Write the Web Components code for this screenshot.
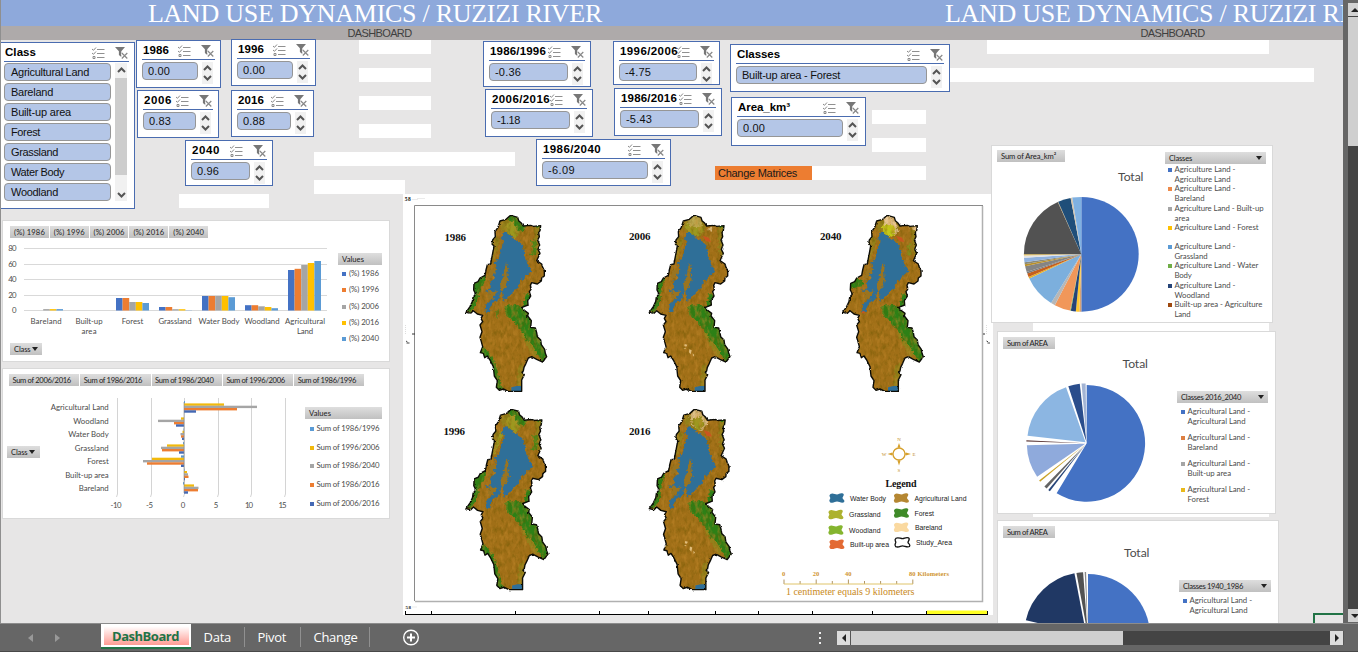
<!DOCTYPE html>
<html lang="en">
<head>
<meta charset="utf-8">
<title>Land Use Dynamics</title>
<style>
html,body{margin:0;height:100%;overflow:hidden;background:#666}
body{font-family:"Liberation Sans",Arial,sans-serif}
</style>
</head>
<body>
<workbook-app></workbook-app>
<script>
const CHART = 'Lato,"Open Sans",sans-serif';
const esc = s => String(s).replace(/&/g,'&amp;').replace(/</g,'&lt;');
/* SVG text with a fixed run width */
const T = (x,y,w,s,o={}) => `<text x="${x}" y="${y}" ${w?`textLength="${w}"`:''} font-size="${o.size||7.8}" font-family='${o.font||CHART}' fill="${o.fill||'#4c4c4c'}" font-weight="${o.bold?700:400}" text-anchor="${o.anchor||'start'}">${esc(s)}</text>`;
const define = (name, render) => customElements.define(name, class extends HTMLElement{
  connectedCallback(){
    if(this.shadowRoot) return;
    this.attachShadow({mode:'open'}).innerHTML = render(this);
  }
});
const ctx = document.createElement('canvas').getContext('2d');

/* Single-line label whose letter spacing is tuned to a given width */
customElements.define('fit-text', class extends HTMLElement{
  connectedCallback(){
    if(this.shadowRoot) return;
    const r = this.attachShadow({mode:'open'});
    r.innerHTML = '<style>:host{display:block;white-space:pre}</style><slot></slot>';
    const w = +this.getAttribute('w'); if(!w) return;
    const cs = getComputedStyle(this), s = this.textContent;
    ctx.font = `${cs.fontWeight} ${cs.fontSize} ${cs.fontFamily}`;
    this.style.letterSpacing = ((w - ctx.measureText(s).width)/s.length).toFixed(3)+'px';
  }
});

define('slicer-box', el => {
  const items = JSON.parse(el.getAttribute('items'));
  const list = el.hasAttribute('list');
  const bt = el.getAttribute('lead') || 0;
  return `<style>
  :host{position:absolute;box-sizing:border-box;border:1px solid #4a6cb0;background:#fff;overflow:hidden}
  .head{display:flex;align-items:center;height:18px;margin:${bt}px 5px 0 5px;border-bottom:1px solid #4a6cb0;padding-left:1px}
  .head fit-text{flex:1;min-width:0;font-size:11.5px;font-weight:700;color:#000;line-height:18px}
  .head svg{flex:none;margin-top:1px}
  .multi{margin-right:9.5px}
  .last{margin-right:1.5px}
  .body{display:flex;margin:${list?1:2}px 7px 0 5px;gap:4px}
  .items{flex:1;display:flex;flex-direction:column;gap:2px}
  .it{box-sizing:border-box;height:18px;border:1px solid #969696;border-radius:4px;background:#b4c6e7;padding-left:${list?6:5}px;line-height:17px;font-size:11px;color:#111}
  .sc{width:${list?12:11}px;background:#f1f1f1;height:${list?138:22}px;display:flex;flex-direction:column;align-items:center;justify-content:${list?'space-between':'space-evenly'}}
  .thumb{flex:1;width:100%;background:#cdcdcd;margin:5px 0 17px}
  .sc svg{flex:none;display:block}
  </style>
  <div class="head"><fit-text w="${el.getAttribute('tw')}">${esc(el.getAttribute('title-text'))}</fit-text>
  <svg class="multi" width="13" height="12" viewBox="0 0 13 12" fill="none" stroke="#909090" stroke-width="1"><path d="M5 2.5H12.5M5 6.5H12.5M5 10.5H12.5"/><path d="M0 2l1.5 1.3L4 .5M0 6l1.5 1.3L4 4.5M1 9.5h2v2H1z" stroke="#8a8a8a"/></svg>
  <svg class="last" width="13" height="12" viewBox="0 0 13 12"><path d="M0 0H10L6.3 4.2V10L3.9 8V4.2Z" fill="#777"/><path d="M6.8 6L12.3 11.5M12.3 6L6.8 11.5" stroke="#fff" stroke-width="2.6"/><path d="M6.8 6L12.3 11.5M12.3 6L6.8 11.5" stroke="#888" stroke-width="1.2"/></svg></div>
  <div class="body"><div class="items">${items.map(([s,w])=>`<div class="it"><fit-text w="${w}">${esc(s)}</fit-text></div>`).join('')}</div>
  <div class="sc"><svg ${list?'style="margin-top:4px"':''} width="9" height="6" viewBox="0 0 9 6"><path d="M1 5L4.5 1.5L8 5" fill="none" stroke="#555" stroke-width="2"/></svg>${list?'<div class="thumb"></div>':''}<svg ${list?'style="margin-bottom:3px"':''} width="9" height="6" viewBox="0 0 9 6"><path d="M1 1L4.5 4.5L8 1" fill="none" stroke="#555" stroke-width="2"/></svg></div></div>`;
});

define('field-button', el => `<style>
  :host{display:flex;align-items:center;justify-content:space-between;box-sizing:border-box;height:12px;flex:none;padding:0 4px;background:linear-gradient(#dedede,#c0c0c0);color:#1c1c1c;font:7.6px/12px ${CHART}}
  i{width:0;height:0;border:3px solid transparent;border-top:4px solid #222;border-bottom:0}
  </style><fit-text w="${el.getAttribute('w')}">${esc(el.getAttribute('label'))}</fit-text>${el.hasAttribute('menu')?'<i></i>':''}`);

define('chart-legend', el => {
  const rows = JSON.parse(el.getAttribute('rows')), pitch = el.getAttribute('pitch');
  return `<style>
  :host{display:flex;flex-direction:column;font:7.8px/9.9px ${CHART};color:#4c4c4c}
  .rows{padding:${el.getAttribute('pad')}}
  .r{display:flex;height:${pitch}px;gap:${el.getAttribute('gap')||2.5}px}
  .r i{width:4px;height:4px;margin-top:3px;flex:none}
  </style><slot></slot><div class="rows">${rows.map(([c,...ls])=>`<div class="r"><i style="background:${c}"></i><div>${ls.map(([s,w])=>`<fit-text w="${w}">${esc(s)}</fit-text>`).join('')}</div></div>`).join('')}</div>`;
});

define('column-chart', () => {
  const C=['#4472c4','#ed7d31','#a5a5a5','#ffc000','#5b9bd5'];
  const G=[[30,[0,0,1.4,1.4,1.4]],[73,[0,0,0,0,0]],[116,[12.5,12.5,8.5,8.5,7.5]],[159,[3.5,3.5,1.3,1.3,.2]],[202,[14.5,14.5,14.5,14.5,13.3]],[245,[5.3,5.3,4.2,3.5,2.3]],[288,[40.5,41.7,45.5,47.5,49.5]]];
  let s='';
  [[80,248.5],[60,264.5],[40,279.5],[20,295.5],[0,310.5]].forEach(([v,y])=>{s+=`<path d="M24 ${y}H327" stroke="#d9d9d9"/>`+T(16.5,y+2.7,v?8.3:4,v,{anchor:'end'})});
  G.forEach(([x,h])=>h.forEach((v,i)=>{s+=`<rect x="${x+i*6.6}" y="${310.5-v}" width="6.6" height="${v}" fill="${C[i]}"/>`}));
  [['Bareland',46,31],['Built-up',89,27],['Forest',132.5,21.5],['Grassland',175,33],['Water Body',219,41],['Woodland',262,35],['Agricultural',305,40]].forEach(([t,x,w])=>s+=T(x,324.3,w,t,{anchor:'middle'}));
  s+=T(89,334,15,'area',{anchor:'middle'})+T(305,334,16,'Land',{anchor:'middle'});
  const yrs=['1986','1996','2006','2016','2040'];
  return `<style>
  :host{position:absolute;box-sizing:border-box;background:#fff;border:1px solid #d9d9d9;display:flex;flex-direction:column}
  .f{display:flex;gap:1px;padding:5px 0 0 7px}.f field-button{width:38.8px}
  .b{display:flex;height:105px}svg{display:block;flex:none}
  .c{width:32px;margin-left:7px;padding-right:4.5px}
  chart-legend{width:44px;margin:15px 0 0 3px}
  </style><div class="f">${yrs.map(y=>`<field-button label="(%) ${y}" w="31"></field-button>`).join('')}</div>
  <div class="b"><svg width="332" height="105" viewBox="3 238 332 105">${s}</svg>
  <chart-legend pitch="16.3" pad="4px 0 0 4px" gap="3" rows='${JSON.stringify(yrs.map((y,i)=>[C[i],['(%) '+y,30]]))}'><field-button label="Values" w="22"></field-button></chart-legend></div>
  <field-button class="c" label="Class" w="16.500" menu></field-button>`;
});

define('bar-chart', () => {
  const C=['#5b9bd5','#f2b90c','#a5a5a5','#ed7d31','#4468b4'];
  const G=[['Agricultural Land',407,58,[1,40,73,53,12]],['Woodland',421,35.5,[0,-3,-26,-10,-8]],['Water Body',434.3,40.5,[-.5,-1.5,-3.5,-3,-2]],['Grassland',448,34,[-1,-17,-23,-22,-5]],['Forest',461.3,21.5,[-3,-32,-41,-37,-3]],['Built-up area',474.6,43.5,[.5,3,4,4.5,1]],['Bareland',488,30,[-1,10,14.5,14,4]]];
  let s='';
  [[-10,117.5,116,11],[-5,151.5,149.5,7],[0,184.5,183,4],[5,218.5,216,4],[10,251.5,249,8],[15,285.5,282.5,8]].forEach(([v,x,c,w])=>s+=`<path d="M${x} 398V494l-1 3" fill="none" stroke="#d4d4d4"/>`+T(c,508,w,v,{anchor:'middle'}));
  G.forEach(([t,y,w,v])=>{s+=T(108.7,y+3,w,t,{anchor:'end'});v.forEach((n,i)=>{s+=`<rect x="${n<0?184+n:184}" y="${y-5.9+i*2.3}" width="${Math.abs(n)}" height="2.4" fill="${C[i]}"/>`})});
  s+='<path d="M184 402V493" stroke="#8a8a8a" stroke-width=".6"/>';
  const yrs=['1986/1996','1996/2006','1986/2040','1986/2016','2006/2016'];
  return `<style>
  :host{position:absolute;box-sizing:border-box;background:#fff;border:1px solid #d9d9d9;display:flex;flex-direction:column}
  .f{display:flex;gap:1px;padding:5px 0 0 6px}.f field-button{width:70.3px;padding-left:3.5px}
  .b{display:flex}svg{display:block;flex:none}
  .c{width:33px;margin:60px 0 0 4px;padding-right:5px}
  chart-legend{width:77px;margin:21px 0 0 12px}
  </style><div class="f">${['2006/2016','1986/2016','1986/2040','1996/2006','1986/1996'].map(y=>`<field-button label="Sum of ${y}" w="58.500"></field-button>`).join('')}</div>
  <div class="b"><field-button class="c" label="Class" w="16.500" menu></field-button><svg width="253" height="130" viewBox="40 386 253 130">${s}</svg>
  <chart-legend pitch="18.65" pad="5px 0 0 5px" rows='${JSON.stringify(yrs.map((y,i)=>[C[i],['Sum of '+y,63]]))}'><field-button label="Values" w="22"></field-button></chart-legend></div>`;
});

define('pie-chart', el => {
  const d = JSON.parse(el.querySelector('script').textContent);
  const P=(cx,cy,r,a)=>[cx+r*Math.sin(a*Math.PI/180),cy-r*Math.cos(a*Math.PI/180)].map(n=>n.toFixed(2)).join(' ');
  const pie = d.slices.map(([a,b,c,e=0])=>{
    const m=(a+b)/2*Math.PI/180, cx=d.cx+e*Math.sin(m), cy=d.cy-e*Math.cos(m);
    return `<path d="M${cx} ${cy}L${P(cx,cy,d.r,a)}A${d.r} ${d.r} 0 ${b-a>180?1:0} 1 ${P(cx,cy,d.r,b)}Z" fill="${c}"/>`}).join('');
  return `<style>
  :host{position:absolute;box-sizing:border-box;background:#fff;border:1px solid #d9d9d9;display:flex;overflow:hidden}
  .l{flex:none;width:${d.left}px}
  svg{display:block}
  .fb{width:${d.fw}px;margin:${d.ft}px 0 0 ${d.fl}px}
  chart-legend{width:${d.lw}px;margin-top:${d.lt}px}
  </style><div class="l"><field-button class="fb" label="${d.field}" w="${d.ftw}"></field-button>
  <svg width="${d.left}" height="${d.h}" viewBox="${d.x} ${d.y} ${d.left} ${d.h}">${T(d.tx,d.ty,25.5,'Total',{size:12.2})}${pie}</svg></div>
  <chart-legend pitch="${d.pitch}" pad="${d.pad}" rows='${JSON.stringify(d.rows)}'><field-button label="${d.cls}" w="${d.clw}" menu></field-button></chart-legend>`;
});

define('map-panel', () => {
  const outline='M335 77L353 82L356 92L363 98L370 108L392 106L400 109L422 107L420 122L416 128L418 140L413 150L419 165L414 178L420 190L410 212L425 222L428 232L433 242V258L425 264L424 273L412 282L395 278L391 286L393 298L388 305L392 318L383 332L384 345L366 352L372 360L385 370L383 378L394 392L392 412L406 414L410 428L412 440L422 450L424 464L434 478L436 490L440 500L428 516L410 508L395 500L385 504L378 520L372 532L370 543L366 547L373 554L365 570V604H325L310 597L298 601L289 592L292 572L283 558L280 530L270 510L262 498L254 503L250 490L241 488L248 470L244 455L240 442L246 425L240 405L248 395L243 385L248 376L232 372L220 362L212 370L198 367L210 350L217 335L219 322L227 312L221 300L222 280L234 275L240 264L255 256L258 240L262 224L272 222L275 205L278 190L282 168L276 162L278 150L286 140L285 125L294 112L300 93L318 88L330 77Z';
  const water='M335 140L358 155L368 165L375 205L385 225L395 242L375 262L360 275L352 295L335 310L322 322L312 336L306 305L300 312L296 332L280 338L272 348L270 366L256 365L260 340L278 326L284 312L268 314L256 300L273 295L268 275L285 268L276 255L288 238L284 218L298 200L305 170L312 155L302 145L312 128L320 130Z';
  const island='M318 220L325 225L322 245L325 270L317 292L304 307L300 285L308 265L313 240Z M270 240L288 236L282 256L268 270L262 262Z M264 300L280 305L292 300L282 322L266 330Z';
  const east='M315 348L340 344L366 350L395 365L406 395L402 405L418 414L424 440L442 475L452 500L432 528L415 495L400 470L380 450L365 425L345 400L325 382L313 360Z M378 308L402 318L394 350L368 350Z';
  const west='M212 280L245 246L257 258L252 280L238 305L230 335L215 366L190 367L205 345L215 318Z';
  const sw='M238 462L250 470L268 490L278 505L292 540L300 570L312 604L280 600L273 558L270 530L252 508L233 490Z';
  const A='#a06f17',Gn='#2d8016',Gr='#9c981f',W='#2f6f98',B='#dfc088';
  const region=(tf,v)=>`<g transform="${tf}"><g clip-path="url(#area)"><g filter="url(#tex)">
   <path d="${outline}" fill="${A}"/>
   <path d="M300 90H365V130L330 140L300 120Z M400 108H430V215L408 190Z M365 415L420 490L400 500L365 440Z M354 530L370 520V600H350Z M280 130L300 150L282 210L262 225Z" fill="#94801a" filter="url(#rough)"/>
   <g filter="url(#rough)">
   ${v.north.map(([p,c])=>`<path d="${p}" fill="${c}"/>`).join('')}
   <path d="${east}" fill="${Gn}"/>
   <path d="${v.west||west}" fill="${Gn}"/>
   ${v.sw?`<path d="${sw}" fill="${Gn}"/>`:''}
   ${v.spots||''}</g></g>
   <path d="${water}" fill="${W}" filter="url(#rough)"/><path d="${island}" fill="#9a7420" filter="url(#rough)"/>
   ${v.urban||''}
   <path d="M334 592L350 588H368V606H334Z" fill="${W}"/></g>
   <path d="${outline}" fill="none" stroke="#0c0c06" stroke-width="4.2" stroke-linejoin="round" filter="url(#edge)"/></g>`;
  const early=[['M320 98L345 92L362 118L345 145L320 128Z',Gr],['M325 70L358 76L362 97L380 106L366 126L350 118L342 97L322 90Z',Gn],['M392 150L410 152L408 196L390 198L398 172Z','#4c8415'],['M404 104H428V120Z',Gn]];
  const v86={north:early,sw:1,spots:`<path d="M284 362L298 360L292 388Z M308 262L320 262L320 280L310 276Z" fill="#53831a"/>`};
  const v96={north:[...early,['M300 140L308 142L288 200L276 215Z',Gr]],sw:1};
  const red='<path d="M358 137L376 143L383 156L368 154Z" fill="#c8551f"/>';
  const pts='<path d="M304 462l8 2l-3 6l-6-2zM318 478l7 3l-3 12l-5-6zM328 490l5 5-4 5zM300 475l7-2v4z" fill="#e0bd7c"/>';
  const lw='M212 276L246 258L236 290L230 335L215 366L190 367L205 345L215 318Z';
  const v06={north:[['M306 96H352L362 126L340 138L312 136Z',Gr],['M325 72L352 78L356 110L318 112L312 92Z','#bba951'],['M370 116L390 112L385 126Z',B],['M404 104H428V120Z',Gn]],west:lw,urban:red+pts};
  const v16={north:[['M316 94L330 74L354 78L370 118L355 140L325 125Z',B],['M320 110L350 96L362 122L342 138Z',Gr],['M404 104H428V120Z',Gn]],west:lw,urban:red+pts};
  const v40={north:[['M318 84L340 72L356 80L362 118L368 125L352 138L322 112Z','#e9c894'],['M318 104L350 106L356 130L338 142L320 130Z','#c2c81a'],['M393 110L422 108V126Z','#e2bd86'],['M392 165L402 160L406 198L392 195Z','#7c8c18']],west:'M212 276L240 262L262 280L250 290L220 296Z',urban:red+'<path d="M256 364h8v6h-8z" fill="#c8551f"/>'};
  const SE='"Liberation Serif",serif',SA='"Liberation Sans",sans-serif';
  let s='';
  [['1986',444.5,241],['2006',629,240],['2040',820,240],['1996',443.5,435],['2016',629,435]].forEach(([t,x,y])=>s+=T(x,y,21.5,t,{font:SE,bold:1,size:11,fill:'#111'}));
  const blob=(x,y,c,o)=>`<path transform="translate(${x} ${y})" d="M-6.5-4C-4.500-5.500-2-3.600 0-3.600C2-3.600 3-5.400 6-4.500C8-3.300 5.600-1.300 5.500 0C5.800 1.800 8.500 2 7 4.200C5 5.500 2 3.600 0 3.600C-2 3.600-3.500 5.500-6.800 4.400C-8.600 2-6.800 1.600-6.700 0C-6.800-1.400-8.600-2.200-6.500-4Z" fill="${c}" ${o?'stroke="#111" stroke-width="1.3"':''}/>`;
  [['Water Body',837,498,850,36,501,W],['Grassland',836,514.5,849,31.5,517.3,'#adb22f'],['Woodland',836,530,849,31.5,532.7,'#85b52f'],['Built-up area',837,544.3,850,39,547.3,'#e36a33'],['Agricultural Land',901.5,498,914.5,52,501,'#b58732'],['Forest',901.5,513,914.5,19.5,515.7,'#3f8a28'],['Bareland',901.5,527.3,915,27,530,'#fad9a0'],['Study_Area',902.5,542.3,916,36,545,'none',1]].forEach(([t,bx,by,x,w,y,c,o])=>s+=blob(bx,by,c,o)+T(x,y,w,t,{font:SA,size:6.9,fill:'#1a1a1a'}));
  const gold='#d6a02c';
  s+=T(885.5,487,31,'Legend',{font:SE,bold:1,size:10,fill:'#111'});
  s+=`<circle cx="899" cy="454" r="6" fill="#fff" stroke="${gold}" stroke-width="1.3"/><path d="M899 448l-1.500-.8L899 443l1.500 4.200zM899 460l-1.500.8L899 465.500l1.500-4.700zM905 454l.8-1.500L911 454l-5.200 1.500zM893 454l-.8-1.500L887.500 454l4.700 1.500z" fill="${gold}"/>`;
  [['N',899,441],['S',899,472],['W',884,456],['E',914,456]].forEach(([t,x,y])=>s+=T(x,y,0,t,{font:SE,size:5,fill:'#c08a20',anchor:'middle'}));
  const ticks=Array.from({length:9},(_,i)=>`M${784+i*16.1} ${i%2||i==6?581:579.5}V584`).join('');
  s+=`<path d="${ticks}" stroke="#9c7a3c" stroke-width=".8"/><path d="M784 584H913" stroke="#dfc46a"/>`;
  [['0',783.5,3],['20',816,6.5],['40',848.3,6.5]].forEach(([t,x,w])=>s+=T(x,575.7,w,t,{font:SE,size:6.5,fill:'#cf9430',anchor:'middle',bold:1}));
  s+=T(909,575.7,40,'80 Kilometers',{font:SE,size:6.5,fill:'#cf9430',bold:1})+T(786,594.7,128.5,'1 centimeter equals 9 kilometers',{font:SE,size:10,fill:'#c98a22'});
  s+=T(404.8,201.4,6,'58',{font:SE,size:5.5,fill:'#111',bold:1})+T(405.5,608.7,5.5,'58',{font:SE,size:5,fill:'#111',bold:1});
  s+=`<path d="M412 199.500h6M417 198.500h8M412 607h5" stroke="#ddd" stroke-width=".6"/><path d="M406 341l1.500 1M406.500 343h3M986.500 341l1.500 .8M987.500 343h2.500" stroke="#444"/><path d="M405.500 325v10M986.500 325v10" stroke="#ddd" stroke-dasharray="1 1"/><path d="M412 334h3M983 334h2" stroke="#333"/>`;
  return `<style>:host{display:block;position:absolute}svg{display:block}</style>
  <svg width="590" height="421" viewBox="403 194 590 421"><defs>
  <clipPath id="area"><path d="${outline}"/></clipPath>
  <filter id="tex" x="0" y="0" width="100%" height="100%" color-interpolation-filters="sRGB"><feTurbulence type="fractalNoise" baseFrequency=".09 .05" numOctaves="3" seed="4" result="n"/><feColorMatrix in="n" values="0 0 0 0 .4  0 0 0 0 .33  0 0 0 0 0  0 1.100 0 0 -.5" result="d"/><feColorMatrix in="n" values="0 0 0 0 .76  0 0 0 0 .53  0 0 0 0 .17  1.300 0 0 0 -.55" result="l"/><feComposite in="d" in2="SourceGraphic" operator="in" result="dd"/><feComposite in="l" in2="SourceGraphic" operator="in" result="ll"/><feMerge><feMergeNode in="SourceGraphic"/><feMergeNode in="dd"/><feMergeNode in="ll"/></feMerge></filter>
  <filter id="rough" color-interpolation-filters="sRGB"><feTurbulence type="fractalNoise" baseFrequency=".12" numOctaves="2" seed="8"/><feDisplacementMap in="SourceGraphic" scale="15" xChannelSelector="R" yChannelSelector="G"/></filter>
  <filter id="edge" color-interpolation-filters="sRGB"><feTurbulence type="fractalNoise" baseFrequency=".12" numOctaves="2" seed="3"/><feDisplacementMap in="SourceGraphic" scale="7" xChannelSelector="R" yChannelSelector="G"/></filter></defs>
  <rect x="403" y="194" width="590" height="421" fill="#fff"/>
  <path d="M414.500 601V205.500H983" fill="none" stroke="#8a8a8a"/><path d="M982.500 206V601.500H415" fill="none" stroke="#b0b0b0" stroke-width="1.5"/>
  ${region('translate(400 190) scale(.33333)',v86)}${region('translate(583.333 190) scale(.33333)',v06)}${region('translate(776.667 190) scale(.33333)',v40)}
  ${region('translate(399 383.300) scale(.3385 .3416)',v96)}${region('translate(582.300 383.300) scale(.3385 .3416)',v16)}
  ${s}
  <rect x="927" y="610.500" width="60" height="3.500" fill="#ff2"/><path d="M405 614.500H988M405.500 611v4M431.500 611v4M515.500 611v4M599.500 611v4M648.500 611v4M715.500 611v4M758.500 611v4M812.500 611v4M872.500 611v4M926.500 611v4M987.500 611v4" stroke="#000" fill="none"/>
  </svg>`;
});

define('sheet-banner', () => `<style>
  :host{display:block;height:40px}
  .t,.s{display:flex;white-space:nowrap}
  .t{height:26px;background:#8ea9db;color:#fff;font:26px/27px "Liberation Serif",serif}
  .s{height:14px;background:#aeaaaa;color:#3f3f3f;font:11px/14px "Liberation Sans",sans-serif}
  .t fit-text:first-child{margin-left:148px;width:797px}.s fit-text:first-child{margin-left:347.5px;width:793px}
  fit-text{flex:none}
  </style><div class="t"><fit-text w="454">LAND USE DYNAMICS / RUZIZI RIVER</fit-text><fit-text w="454">LAND USE DYNAMICS / RUZIZI RIVER</fit-text></div>
  <div class="s"><fit-text w="64">DASHBOARD</fit-text><fit-text w="64">DASHBOARD</fit-text></div>`);

define('work-sheet', () => {
  const S=(x,y,w,h,t,tw,items,extra='')=>`<slicer-box style="left:${x}px;top:${y}px;width:${w}px;height:${h}px" title-text="${t}" tw="${tw}" items='${JSON.stringify(items)}' ${extra}></slicer-box>`;
  const strips=[[359,40,72],[359,68,72],[359,96,72],[359,124,72],[314,152,201],[314,180,91],[179,194,90],[872,110,54],[872,138,54],[812,166,114],[987,40,282],[940,68,374]];
  const AL=['Agriculture Land -',61],BL=['Agricultural Land -',62.5];
  const p1={x:992,y:162,h:158,left:173,field:'Sum of Area_km²',fw:68,ft:4,fl:5,ftw:55.5,tx:1118,ty:181.3,cx:1081.3,cy:254.3,r:57.4,
   lw:101,lt:6,cls:'Classes',clw:23,pitch:19.3,pad:'1px 0 0 3px',
   slices:[[0,180,'#4472c4'],[180,182,'#d6a276'],[182,185.5,'#ffc832'],[185.5,190.5,'#264478'],[190.5,191.2,'#70ad47'],[191.2,207.5,'#f1975a'],[207.5,211.8,'#b7b7b7'],[211.8,245,'#7cafdd'],[245,246.7,'#e7b020'],[246.7,250.4,'#c55f1c'],[250.4,252,'#7b7b7b'],[252,258,'#848484'],[258,260,'#b9902a'],[260,262,'#8a8a78'],[262,266.5,'#8fb2e0'],[266.5,268.8,'#e4e4e4'],[268.8,270,'#ecc14d'],[270,335.8,'#525252'],[335.8,336.3,'#c0a060'],[336.3,349.3,'#1f4e79'],[349.3,351,'#d5c5ad'],[351,360,'#7fb1e2']],
   rows:[['#4472c4',AL,['Agriculture Land',56]],['#ed8a4a',AL,['Bareland',30]],['#a5a5a5',['Agriculture Land - Built-up',89],['area',15]],['#ffc000',['Agriculture Land - Forest',84]],['#5b9bd5',AL,['Grassland',33]],['#70ad47',['Agriculture Land - Water',84],['Body',17]],['#264478',AL,['Woodland',35]],['#9e480e',['Built-up area - Agriculture',88],['Land',16]]]};
  const p2={x:998,y:349,h:162,left:179,field:'Sum of AREA',fw:52,ft:5,fl:5,ftw:41,tx:1122.500,ty:368.3,cx:1086.7,cy:443.3,r:58.4,
   lw:91,lt:59,cls:'Classes 2016_2040',clw:60,pitch:25.9,pad:'4px 0 0 4px',
   slices:[[0,211,'#4472c4'],[217.5,219.5,'#264478',2],[221.5,224.5,'#636363',2],[230.5,232,'#c9a227',2],[235.5,268.5,'#8faadc',1.5],[271.7,273,'#5d3a3a',2],[276.5,340.5,'#8cb6e2',1.5],[342,353.5,'#2a4d8c',1.5],[355,359,'#a3b4d4',1.5]],
   rows:[['#4472c4',BL,['Agricultural Land',58]],['#dd7f42',BL,['Bareland',30]],['#a5a5a5',BL,['Built-up area',43.5]],['#e9b91b',BL,['Forest',21.5]]]};
  const p3={x:998,y:538,h:140,left:181,field:'Sum of AREA',fw:52,ft:5,fl:5,ftw:41,tx:1124,ty:557.3,cx:1088,cy:636,r:62,
   lw:92,lt:59,cls:'Classes 1940_1986',clw:60,pitch:25.9,pad:'4px 0 0 4px',
   slices:[[0,180,'#4472c4'],[283,349,'#203864',2.5],[349.5,355.7,'#525252',2],[357,358.3,'#8a8a8a',2]],
   rows:[['#4472c4',BL,['Agricultural Land',58]]]};
  const pie=(x,y,w,h,d)=>`<pie-chart style="left:${x}px;top:${y}px;width:${w}px;height:${h}px"><script type="application/json">${JSON.stringify(d)}<\/script></pie-chart>`;
  return `<style>
  :host{display:block;position:relative;overflow:hidden;background:#e7e6e6}
  .cells{position:absolute;left:0;top:0;display:block}
  .cm{position:absolute;left:715px;top:166px;width:94px;height:14px;padding-left:3px;background:#ed7d31;font-size:11px;line-height:15px;color:#1a1a1a}
  .sel{position:absolute;left:1313px;top:613px;width:40px;height:20px;border:2px solid #217346;box-sizing:border-box}
  .edge{position:absolute;left:0;top:0;width:1px;height:100%;background:#8f8f8f}
  </style>
  <svg class="cells" width="1343" height="623"><g fill="#fff">${strips.map(([x,y,w])=>`<rect x="${x}" y="${y}" width="${w}" height="14"/>`).join('')}<rect x="1033" y="322" width="236" height="195"/></g></svg>
  <sheet-banner></sheet-banner>
  ${S(-2,42,137,167,'Class',31,[['Agricultural Land',78],['Bareland',42],['Built-up area',60],['Forest',29],['Grassland',47],['Water Body',53],['Woodland',47]],'list')}
  ${S(136,40,85,48,'1986',26,[['0.00',22]])}
  ${S(231,39,85,47,'1996',26,[['0.00',22]])}
  ${S(137,90,82,48,'2006',28,[['0.83',22]])}
  ${S(231,90,83,47,'2016',26,[['0.88',22]])}
  ${S(185,140,88,46,'2040',28,[['0.96',22]])}
  ${S(483,41,108,46,'1986/1996',56,[['-0.36',26]])}
  ${S(613,41,107,44,'1996/2006',58,[['-4.75',26]])}
  ${S(485,89,108,48,'2006/2016',58,[['-1.18',23]])}
  ${S(614,88,108,48,'1986/2016',56,[['-5.43',26]])}
  ${S(536,139,135,47,'1986/2040',58,[['-6.09',27]])}
  ${S(730,44,220,48,'Classes',43,[['Built-up area - Forest',98]])}
  ${S(731,97,135,49,'Area_km³',52,[['0.00',22]])}
  <div class="cm"><fit-text w="79">Change Matrices</fit-text></div>
  <map-panel style="left:403px;top:194px"></map-panel>
  <column-chart style="left:2px;top:220px;width:388px;height:142px"></column-chart>
  <bar-chart style="left:2px;top:368px;width:388px;height:151px"></bar-chart>
  ${pie(991,145,282,178,p1)}${pie(997,331,279,183,p2)}${pie(997,520,282,183,p3)}
  <div class="sel"></div><div class="edge"></div>`;
});

define('scroll-bar', el => {
  const v=el.hasAttribute('vertical');
  return v?`<style>
  :host{display:flex;flex-direction:column;background:#444;overflow:hidden;box-sizing:border-box}
  b{flex:none;height:13px;background:#d2d2d2;display:flex;align-items:center;justify-content:flex-start;padding-left:2px}
  .th{height:129px;background:#cfcfcf;margin-top:1px}.sp{flex:1}svg{flex:none}
  </style><b><svg width="10" height="6"><path d="M1 5L5 1L9 5Z" fill="#222"/></svg></b><div class="th"></div><div class="sp"></div><b><svg width="10" height="6"><path d="M1 1L5 5L9 1Z" fill="#222"/></svg></b>`
  :`<style>
  :host{display:flex;background:#444;height:14px}
  b{flex:none;width:13px;background:#dcdcdc;display:flex;align-items:center;justify-content:center;border:solid #555;border-width:0 1px 0 0}
  .th{width:272px;background:#cfcfcf}.sp{flex:1}
  </style><b><svg width="6" height="8"><path d="M5 0V8L1 4Z" fill="#222"/></svg></b><div class="th"></div><div class="sp"></div><b><svg width="6" height="8"><path d="M1 0V8L5 4Z" fill="#222"/></svg></b>`;
});

define('sheet-tabs', () => `<style>
  :host{display:flex;box-sizing:border-box;height:29px;background:#666;border-top:1px solid #8c8c8c;border-bottom:1px solid #484848;color:#fff;font:13px/26px "Open Sans","Noto Sans",sans-serif;overflow:hidden}
  .nav{width:101px;display:flex;gap:22px;align-items:center;padding-left:28px;box-sizing:border-box}
  .on{width:90px;height:24px;box-sizing:border-box;border:solid #fff;border-width:0 2px 2px 3px;box-shadow:0 2px #217346;background:linear-gradient(#fff 15%,#ff9c94);color:#217346;font-weight:700;padding-left:8px;line-height:27px;margin-top:-1px}
  .tab{box-sizing:border-box;padding-left:12.5px;display:flex}
  .tab:after{content:"";width:1px;height:20px;margin:3px 0 0 auto;background:#909090}
  .add{margin:5px 0 0 32px}
  .dots{margin:8px 16px 0 auto;display:flex;flex-direction:column;gap:3px}.dots i{width:2px;height:2px;background:#eee}
  scroll-bar{width:507px;margin:7px 14px 0 0}
  </style>
  <div class="nav"><svg width="5" height="8"><path d="M5 0V8L0 4Z" fill="#999"/></svg><svg width="5" height="8"><path d="M0 0V8L5 4Z" fill="#999"/></svg></div>
  <div class="on"><fit-text w="67">DashBoard</fit-text></div>
  <div class="tab" style="width:54px"><fit-text w="27.500">Data</fit-text></div>
  <div class="tab" style="width:56px"><fit-text w="28.500">Pivot</fit-text></div>
  <div class="tab" style="width:69px"><fit-text w="44">Change</fit-text></div>
  <svg class="add" width="18" height="18" viewBox="0 0 18 18" fill="none" stroke="#fff"><circle cx="9" cy="8.500" r="7.300" stroke-width="1.400"/><path d="M9 4.500V12.500M5 8.500H13" stroke-width="2"/></svg>
  <div class="dots"><i></i><i></i><i></i></div>
  <scroll-bar></scroll-bar>`);

define('workbook-app', () => `<style>
  :host{display:grid;grid-template:623px 29px/1343px 5px 10px;width:1358px;height:652px;background:#666;overflow:hidden}
  sheet-tabs{grid-column:1/-1}
  .v{margin-top:3px;height:619px}
  </style><work-sheet></work-sheet><span></span><scroll-bar class="v" vertical></scroll-bar><sheet-tabs></sheet-tabs>`);
</script>
</body>
</html>
